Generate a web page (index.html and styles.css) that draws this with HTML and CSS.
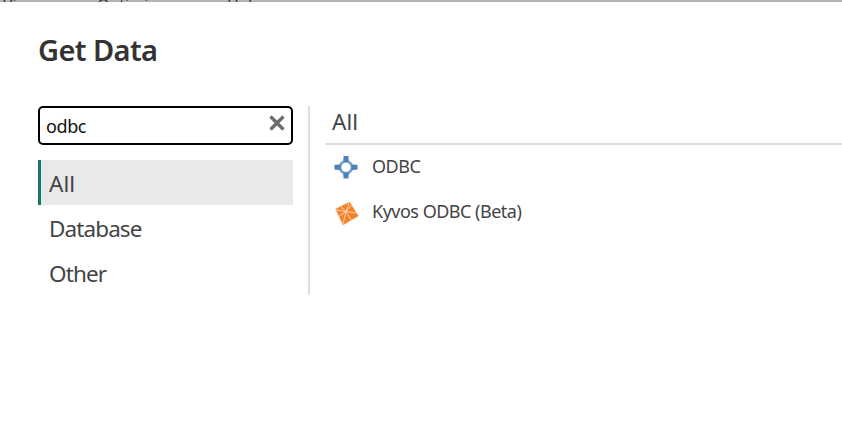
FILE: index.html
```html
<!DOCTYPE html>
<html lang="en">
<head>
<meta charset="utf-8">
<title>Get Data</title>
<link rel="stylesheet" href="styles.css">
</head>
<body>
<nav class="ribbon"><span class="tab view">View</span><span class="tab optimize">Optimize</span><span class="tab help">Help</span></nav>
<main class="dialog">
  <h1>Get Data</h1>
  <div class="content">
    <aside class="sidebar">
      <div class="search">
        <span class="query">odbc</span>
        <svg class="clear" viewBox="0 0 16 16"><path d="M1.5 1.5L14.5 14.5M14.5 1.5L1.5 14.5"/></svg>
      </div>
      <ul class="categories">
        <li class="selected">All</li>
        <li class="tight">Database</li>
        <li class="tight">Other</li>
      </ul>
    </aside>
    <section class="results">
      <h2>All</h2>
      <div class="item">
        <svg class="icon" viewBox="0 0 24 24">
          <path fill="#4d82b8" d="M9.5 1h5v5h-5zM9.5 18.5h5v5h-5zM.5 9.8h5v5h-5zM18.5 9.8h5v5h-5z"/>
          <circle cx="12" cy="12.3" r="6" fill="#fff" stroke="#7ba3cd" stroke-width="2.8"/>
          <path fill="#4d82b8" d="M9.5 4h5v3h-5zM9.5 17.5h5v3h-5zM3.5 9.8h3v5h-3zM17.5 9.8h3v5h-3z"/>
        </svg>
        <span class="label">ODBC</span>
      </div>
      <div class="item">
        <svg class="icon" viewBox="0 0 24 24">
          <path fill="#f4812c" stroke="#f9b27b" stroke-width=".6" d="M1.5 9L15.5 2L24.5 16L9 25Z"/>
          <path fill="none" stroke="#fcd9ba" stroke-width=".9" d="M15 3L12 11.500L2 10M12 11.500L4 17M12 11.500L9 24M12 11.500L17 20M12 11.500L22 13M7 7L12 11.500M17 6L12 11.500"/>
        </svg>
        <span class="label">Kyvos ODBC (Beta)</span>
      </div>
    </section>
  </div>
</main>
</body>
</html>
```
FILE: styles.css
```css
* { box-sizing: border-box; }
body {
  margin: 0;
  height: 435px;
  overflow: hidden;
  background: #fff;
  color: #444;
  font-family: "Noto Sans", "Open Sans", sans-serif;
}
.ribbon {
  height: 2px;
  overflow: hidden;
  display: flex;
  background: #b5b5b5;
  color: #333;
  font-size: 16px;
  line-height: 11px;
}
.tab { flex: none; }
.view { width: 97px; padding-left: 3px; }
.optimize { width: 130px; }
.dialog { padding: 28px 0 0 38px; }
h1 {
  margin: 0;
  height: 76px;
  color: #333;
  font-size: 29px;
  font-weight: 600;
  line-height: 40px;
  letter-spacing: -0.6px;
}
.content { display: flex; height: 189px; }
.sidebar {
  width: 272px;
  padding-right: 15px;
  border-right: 2px solid #dedede;
}
.search {
  display: flex;
  align-items: center;
  justify-content: space-between;
  height: 39px;
  padding: 0 6px;
  border: 2px solid #000;
  border-radius: 5px;
  color: #111;
  font-size: 18px;
  line-height: 35px;
}
.query { padding-top: 2px; letter-spacing: -0.4px; }
.clear { width: 16px; height: 16px; margin-top: -6px; }
.clear path { fill: none; stroke: #6c6c6c; stroke-width: 3.2; }
.categories { list-style: none; margin: 15px 0 0; padding: 0; }
.categories li {
  height: 45px;
  padding-left: 8px;
  border-left: 3px solid transparent;
  font-size: 22.5px;
  line-height: 48px;
}
.categories .selected { background: #e9e9e9; border-left-color: #117865; }
.categories .tight { letter-spacing: -0.9px; }
.results { flex: 1; margin-left: 15px; }
h2 {
  margin: 0;
  height: 39px;
  padding-left: 7px;
  border-bottom: 2px solid #dedede;
  font-size: 22.5px;
  font-weight: 400;
  line-height: 32px;
}
.item {
  display: flex;
  align-items: center;
  height: 45px;
  padding-left: 9px;
  font-size: 18px;
  line-height: 43px;
}
.icon { width: 24px; height: 24px; margin: -1px 14px 0 0; overflow: visible; }
.item .label { height: 45px; letter-spacing: -0.5px; }
```
